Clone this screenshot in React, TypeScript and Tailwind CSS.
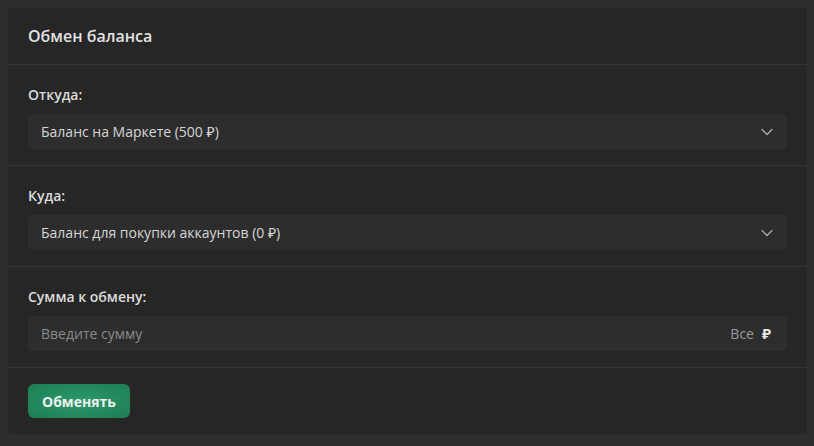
import { ChevronDown } from 'lucide-react'

const Section = ({ label, children }: { label: string; children: React.ReactNode }) => (
  <div className="px-5 pt-[20px] pb-4 border-b border-[#353535]">
    <div className="text-[14px] leading-[19px] font-semibold text-[#dcdcdc] mb-[10px]">{label}</div>
    {children}
  </div>
)

const Select = ({ value }: { value: string }) => (
  <div className="h-[35px] rounded-[4px] bg-[#2d2d2d] flex items-center justify-between pl-[13px] pr-[10px]">
    <span className="text-[14px] text-[#d6d6d6]">{value}</span>
    <ChevronDown size={20} strokeWidth={1.6} className="text-[#a8a8a8]" />
  </div>
)

export default function App() {
  return (
    <div className="min-h-[446px] bg-[#2e2e2e] pt-2 pl-2 pr-[7px] pb-[14px]" style={{ fontFamily: '"Open Sans", "Noto Sans", sans-serif' }}>
      <div className="bg-[#262626] rounded-[3px]">
        <div className="h-[57px] px-5 flex items-center border-b border-[#353535]">
          <h2 className="text-[16px] font-semibold text-[#e2e2e2]">Обмен баланса</h2>
        </div>

        <Section label="Откуда:">
          <Select value="Баланс на Маркете (500 ₽)" />
        </Section>

        <Section label="Куда:">
          <Select value="Баланс для покупки аккаунтов (0 ₽)" />
        </Section>

        <Section label="Сумма к обмену:">
          <div className="h-[35px] rounded-[4px] bg-[#2d2d2d] flex items-center justify-between pl-[13px] pr-[16px]">
            <span className="text-[14px] text-[#8a8a8a]">Введите сумму</span>
            <div className="flex items-center gap-[8px]">
              <span className="text-[14px] text-[#9a9a9a]">Все</span>
              <span className="text-[15px] font-bold text-[#e6e6e6]">₽</span>
            </div>
          </div>
        </Section>

        <div className="px-5 py-4">
          <button className="h-[34px] px-[14px] rounded-[6px] text-[14px] font-bold text-[#f0f0f0] bg-[radial-gradient(ellipse_at_center,#2b9a6b_0%,#1d7d52_100%)]">
            Обменять
          </button>
        </div>
      </div>
    </div>
  )
}
